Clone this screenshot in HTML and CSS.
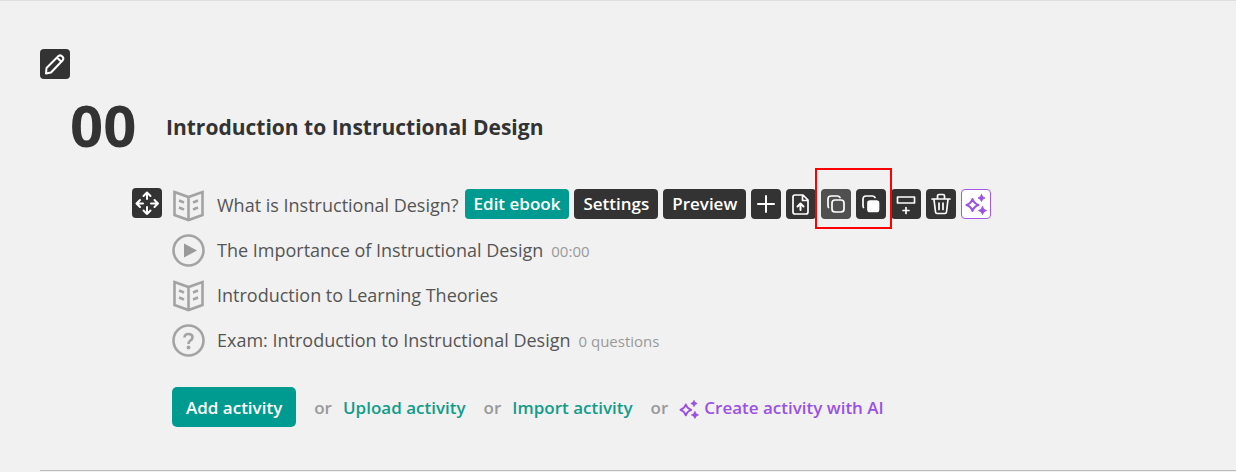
FILE: index.html
```html
<!DOCTYPE html>
<html lang="en">
<head>
<meta charset="utf-8">
<meta name="viewport" content="width=device-width, initial-scale=1">
<title>Course contents</title>
<link rel="stylesheet" href="styles.css">
</head>
<body>
<svg class="defs" aria-hidden="true">
  <symbol id="book" viewBox="0 0 33 33">
    <path d="M2.500 3 16.500 8 30.500 3V26L16.500 31 2.500 26ZM16.500 8V31M7 11.500 12 13.500M7 18.500 12 20.500M26 11.500 21 13.500M26 18.500 21 20.500" fill="none" stroke="#a3a3a3" stroke-width="2.600"/>
  </symbol>
  <symbol id="sparkles" viewBox="0 0 22 22">
    <path d="M7.500 6Q9 10.500 13.500 12 9 13.500 7.500 18 6 13.500 1.500 12 6 10.500 7.500 6Z" fill="none" stroke="currentColor" stroke-width="2" stroke-linejoin="round"/>
    <path d="M16.500 1.500Q17.200 4.400 20 5 17.200 5.700 16.500 8.500 15.800 5.700 13 5 15.800 4.400 16.500 1.500ZM17.500 13.500Q18.300 16.900 21.500 17.500 18.300 18.300 17.500 21.500 16.700 18.300 13.500 17.500 16.700 16.900 17.500 13.500Z" fill="currentColor" stroke="currentColor" stroke-width=".8"/>
  </symbol>
</svg>
<main class="section">
  <button class="icon-btn" aria-label="Edit section">
    <svg viewBox="0 0 30 30"><path d="M6 24.500 6.500 19 18.500 7Q20.500 5.500 22.300 7.500 24.300 9.500 22.500 11.500L11 23.500ZM17 8.500 21 12.500" stroke-width="2"/></svg>
  </button>
  <header class="heading">
    <span class="number">00</span>
    <h1 class="title">Introduction to Instructional Design</h1>
  </header>
  <ul class="activities">
    <li class="activity">
      <button class="icon-btn move" aria-label="Move activity">
        <svg viewBox="0 0 30 30"><path d="M15 11V5M11.500 8 15 4.500 18.500 8M15 19V26M11.500 22.500 15 26 18.500 22.500M11 15.500H5M8 12 4.500 15.500 8 19M19 15.500H26M22.500 12 26 15.500 22.500 19" stroke-width="2"/></svg>
      </button>
      <svg class="type"><use href="#book"/></svg>
      <span class="name">What is Instructional Design?</span>
      <div class="tools">
        <button class="btn primary">Edit ebook</button>
        <button class="btn">Settings</button>
        <button class="btn">Preview</button>
        <button class="icon-btn" aria-label="Add"><svg viewBox="0 0 30 30"><path d="M15 7V23M7 15H23" stroke-width="2"/></svg></button>
        <button class="icon-btn" aria-label="Upload file"><svg viewBox="0 0 30 30"><path d="M9 6H17L22 11V23Q22 25 20 25H9Q7 25 7 23V8Q7 6 9 6ZM16.500 6V11.500H22" /><path d="M14.500 21V15M11.500 17.500 14.500 14.500 17.500 17.500" stroke-width="2"/></svg></button>
        <div class="copy-group">
          <button class="icon-btn hovered" aria-label="Copy"><svg viewBox="0 0 30 30"><path d="M7.500 18.500Q7 18 7 16.500V10Q7 7 10 7H16.500Q18 7 19 8.500"/><rect x="11" y="11" width="12" height="12" rx="3"/></svg></button>
          <button class="icon-btn" aria-label="Duplicate"><svg viewBox="0 0 30 30"><path d="M7.500 18.500Q7 18 7 16.500V10Q7 7 10 7H16.500Q18 7 19 8.500"/><rect x="12" y="12" width="10.500" height="10.500" rx="2" fill="#fff"/></svg></button>
        </div>
        <button class="icon-btn" aria-label="Add section below"><svg viewBox="0 0 30 30"><path d="M6.500 8H23.500V14H6.500ZM15 18.500V24.500M12 21.500H18"/></svg></button>
        <button class="icon-btn" aria-label="Delete"><svg viewBox="0 0 30 30"><path d="M6 10H24M11.500 10V7Q11.500 5.500 13 5.500H17Q18.500 5.500 18.500 7V10M8 10.500 9.500 23Q9.700 24.500 11 24.500H19Q20.300 24.500 20.500 23L22 10.500M13 14V20.500M17 14V20.500"/></svg></button>
        <button class="icon-btn ai" aria-label="AI assistant"><svg class="spark"><use href="#sparkles"/></svg></button>
      </div>
    </li>
    <li class="activity">
      <svg class="type" viewBox="0 0 33 33"><circle cx="16.500" cy="16.500" r="15" fill="none" stroke="#a3a3a3" stroke-width="2.600"/><path d="M12 9.500 25 16.500 12 23.500Z" fill="#999"/></svg>
      <span class="name">The Importance of Instructional Design</span>
      <span class="meta">00:00</span>
    </li>
    <li class="activity">
      <svg class="type"><use href="#book"/></svg>
      <span class="name">Introduction to Learning Theories</span>
    </li>
    <li class="activity">
      <svg class="type" viewBox="0 0 33 33"><circle cx="16.500" cy="16.500" r="15" fill="none" stroke="#a3a3a3" stroke-width="2.600"/><path d="M12.500 13.500Q12.500 10 16.500 10 20.500 10 20.500 13.200 20.500 15 18.500 16.300 16.500 17.500 16.500 20" fill="none" stroke="#a3a3a3" stroke-width="2.600"/><circle cx="16.500" cy="23.500" r="1.900" fill="#a3a3a3"/></svg>
      <span class="name">Exam: Introduction to Instructional Design</span>
      <span class="meta">0 questions</span>
    </li>
  </ul>
  <div class="actions">
    <button class="add">Add activity</button>
    <span class="or">or</span>
    <a class="link" href="#upload">Upload activity</a>
    <span class="or">or</span>
    <a class="link" href="#import">Import activity</a>
    <span class="or">or</span>
    <a class="link violet" href="#create"><svg class="spark"><use href="#sparkles"/></svg>Create activity with AI</a>
  </div>
</main>
</body>
</html>
```
FILE: styles.css
```css
* { box-sizing: border-box; }
body {
  margin: 0;
  background: #f1f1f1;
  border-top: 1px solid #dfdfdf;
  color: #333;
  font-family: "Segoe UI", "Open Sans", "Noto Sans", sans-serif;
}
button { font: inherit; border: 0; padding: 0; cursor: pointer; }
.defs { display: none; }
.section {
  margin-left: 40px;
  padding-top: 48px;
  border-bottom: 1px solid #bbb;
}
.icon-btn {
  display: flex;
  align-items: center;
  justify-content: center;
  flex: none;
  width: 30px;
  height: 30px;
  border-radius: 4px;
  background: #333;
}
.icon-btn svg {
  flex: none;
  width: 30px;
  height: 30px;
  fill: none;
  stroke: #fff;
  stroke-width: 1.7;
  stroke-linecap: round;
  stroke-linejoin: round;
}
.icon-btn.hovered { background: #505050; }
.icon-btn.ai { background: #fff; border: 1px solid #a259e6; color: #9b51e0; }
.icon-btn .spark { width: 22px; height: 22px; stroke: none; }
.heading {
  display: flex;
  align-items: center;
  height: 96px;
  padding-left: 30px;
}
.number { width: 96px; padding-bottom: 4px; font-size: 58px; font-weight: 700; line-height: 60px; }
.title { margin: 0; font-size: 21px; font-weight: 700; line-height: 30px; }
.activities { margin: 0; padding: 8px 0 0 132px; list-style: none; }
.activity { position: relative; display: flex; align-items: center; height: 45px; }
.move { position: absolute; left: -40px; top: 5px; }
.type { flex: none; width: 33px; height: 33px; margin-right: 12px; }
.name { padding-bottom: 2px; color: #555; font-size: 18px; line-height: 26px; white-space: nowrap; }
.meta { margin-left: 8px; color: #999; font-size: 15px; line-height: 26px; }
.tools { display: flex; gap: 5px; margin-left: 6px; padding-bottom: 3px; }
.btn {
  height: 30px;
  padding: 0 9px;
  border-radius: 4px;
  background: #333;
  color: #fff;
  font-size: 17px;
  font-weight: 600;
  line-height: 30px;
  white-space: nowrap;
}
.btn.primary, .add { background: #009b90; }
.copy-group { position: relative; display: flex; gap: 5px; }
.copy-group::after {
  content: "";
  position: absolute;
  inset: -21px -6px -10px;
  border: 2px solid #f00;
  pointer-events: none;
  z-index: 1;
}
.actions {
  display: flex;
  align-items: center;
  padding: 24px 0 43px 132px;
  font-size: 17px;
  font-weight: 600;
  white-space: nowrap;
}
.add {
  height: 40px;
  padding: 0 14px;
  border-radius: 5px;
  color: #fff;
}
.or { margin: 0 11px 0 18px; color: #999; }
.link { display: flex; align-items: center; color: #139b8a; text-decoration: none; }
.link.violet { color: #9b51e0; }
.link .spark { width: 20px; height: 20px; margin: 4px 5px 0 0; }
```
